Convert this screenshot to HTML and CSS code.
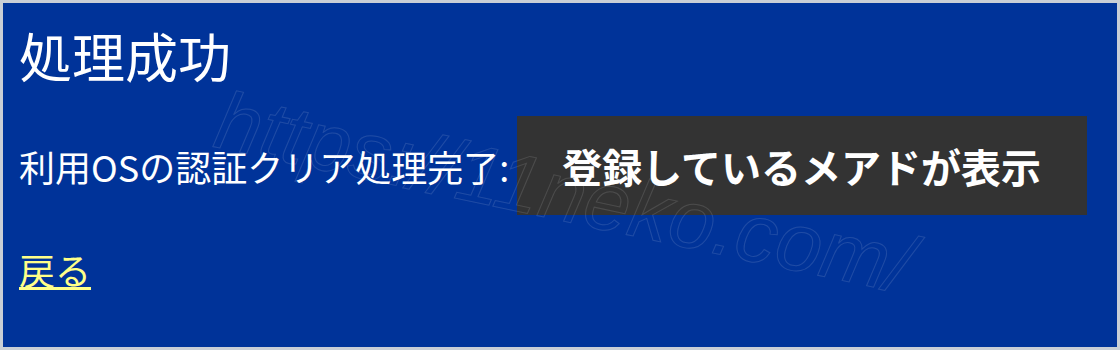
FILE: index.html
```html
<!DOCTYPE html>
<html lang="ja">
<head>
  <meta charset="UTF-8" />
  <meta name="viewport" content="width=device-width, initial-scale=1.0"/>
  <title>処理成功</title>
  <link rel="stylesheet" href="styles.css">
</head>
<body>
  <div class="frame">
    <div class="panel">
      <h1 class="title">処理成功</h1>

      <div class="result">
        <span class="label">利用OSの認証クリア処理完了:</span>
        <span class="mask">登録しているメアドが表示</span>
      </div>

      <a class="back" href="#">戻る</a>
    </div>

    <div class="watermark">https://11neko.com/</div>
  </div>
</body>
</html>
```

FILE: styles.css
```css
:root {
  --blue: #003399;
  --frame: #c9ced6;
  --mask: #333333;
  --link: #ffff88;
  --white: #ffffff;
}

* {
  box-sizing: border-box;
  margin: 0;
  padding: 0;
}

body {
  font-family: "Noto Sans CJK JP", "Noto Sans", sans-serif;
  background-color: var(--frame);
  color: var(--white);
}

.frame {
  position: relative;
  width: 1120px;
  height: 350px;
  border: 3px solid var(--frame);
  overflow: hidden;
}

.panel {
  height: 100%;
  background-color: var(--blue);
  padding: 22px 16px 0;
}

.title {
  font-size: 53px;
  font-weight: normal;
  line-height: 60px;
}

.result {
  display: flex;
  align-items: center;
  margin-top: 31px;
}

.label {
  font-size: 36px;
  line-height: 40px;
}

.mask {
  display: flex;
  align-items: center;
  height: 99px;
  margin-left: 8px;
  padding: 0 46px 0 45px;
  background-color: var(--mask);
  font-size: 40px;
  font-weight: bold;
}

.back {
  display: inline-block;
  margin-top: 34px;
  font-size: 36px;
  line-height: 40px;
  color: var(--link);
  text-underline-offset: 2px;
}

/* screenshot watermark */
.watermark {
  position: absolute;
  left: 224px;
  top: 70px;
  font-family: "Liberation Sans", sans-serif;
  font-size: 82px;
  font-style: italic;
  color: transparent;
  -webkit-text-stroke: 1px rgba(255, 255, 255, 0.12);
  transform: rotate(12deg);
  transform-origin: left top;
  pointer-events: none;
  white-space: nowrap;
}
```
